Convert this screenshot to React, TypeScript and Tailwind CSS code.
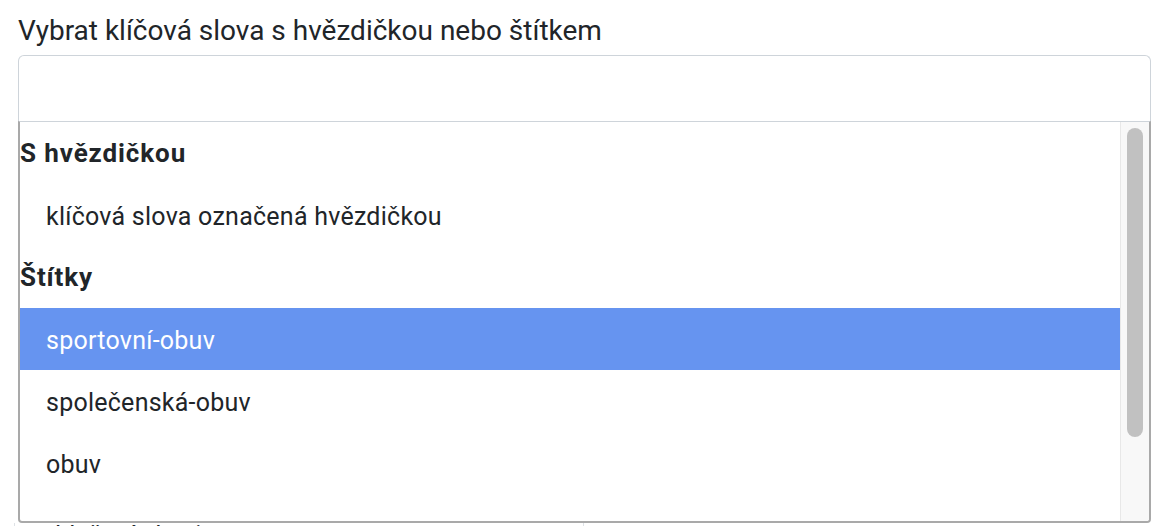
const groups = [
  { label: 'S hvězdičkou', options: ['klíčová slova označená hvězdičkou'] },
  { label: 'Štítky', options: ['sportovní-obuv', 'společenská-obuv', 'obuv'] },
];

const selected = 'sportovní-obuv';

export default function App() {
  return (
    <div className="h-[526px] w-full overflow-hidden bg-white font-['Roboto',sans-serif] text-[#212529]">
      <div className="pl-[18px] pt-[15px] text-[28px] leading-[31px]">
        Vybrat klíčová slova s hvězdičkou nebo štítkem
      </div>

      {/* select box */}
      <div className="ml-[18px] mt-[9px] h-[66px] w-[1133px] rounded-t-[6px] border border-b-0 border-[#ced4da]" />

      {/* dropdown */}
      <div className="ml-[18px] flex h-[402px] w-[1133px] overflow-hidden rounded-b-[4px] border-x-2 border-b-2 border-t border-[#a9a9a9] border-t-[#ced4da] border-r-[#a9a9a9]">
        <div className="flex-1 overflow-hidden">
          {groups.map((g) => (
            <div key={g.label}>
              <div className="flex h-[62px] items-center text-[26px] font-bold tracking-[0.9px]">{g.label}</div>
              {g.options.map((o) => (
                <div
                  key={o}
                  className={
                    o === selected
                      ? 'flex h-[62px] items-center bg-[#6694f0] pl-[26px] pt-[4px] text-[25px] tracking-[0.25px] text-white'
                      : 'flex h-[62px] items-center pl-[26px] pt-[4px] text-[25px] tracking-[0.25px]'
                  }
                >
                  {o}
                </div>
              ))}
            </div>
          ))}
        </div>
        {/* scrollbar */}
        <div className="flex w-[29px] justify-center border-l border-[#e8e8e8] bg-[#f8f8f8] pt-[6px]">
          <div className="h-[309px] w-[16px] rounded-full bg-[#c1c1c1]" />
        </div>
      </div>

      {/* page content behind the dropdown */}
      <div className="ml-[14px] flex h-[4px] w-[1137px] overflow-hidden border-l border-[#dee2e6]">
        <div className="w-[569px] border-r border-[#dee2e6] pl-[26px]">
          <div className="-mt-[1px] text-[25px] leading-[28px]">oblečení obuvi</div>
        </div>
      </div>
    </div>
  );
}
